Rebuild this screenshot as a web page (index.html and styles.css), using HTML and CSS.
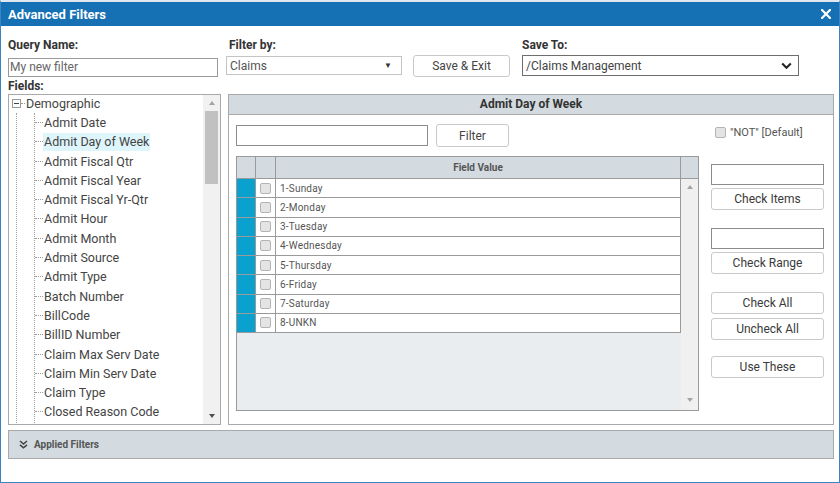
FILE: index.html
```html
<!DOCTYPE html>
<html lang="en">
<head>
    <meta charset="UTF-8">
    <meta name="viewport" content="width=device-width, initial-scale=1.0">
    <title>Advanced Filters</title>
    <link rel="stylesheet" href="styles.css">
</head>
<body>
    <div class="dialog">
        <div class="titlebar">
            <span class="title">Advanced Filters</span>
            <svg class="close" width="10" height="10" viewBox="0 0 10 10">
                <path d="M1 1 L9 9 M9 1 L1 9" stroke="#fff" stroke-width="2.2" stroke-linecap="square"/>
            </svg>
        </div>

        <div class="content">
            <div class="top-row">
                <div class="field query">
                    <label>Query Name:</label>
                    <input class="text" type="text" value="My new filter">
                </div>
                <div class="field filter-by">
                    <label>Filter by:</label>
                    <div class="select light">
                        <span>Claims</span>
                        <span class="caret">&#9660;</span>
                    </div>
                </div>
                <button class="btn save">Save &amp; Exit</button>
                <div class="field save-to">
                    <label>Save To:</label>
                    <div class="select dark">
                        <span>/Claims Management</span>
                        <svg width="11" height="8" viewBox="0 0 11 8">
                            <path d="M1.2 1.5 L5.5 5.8 L9.8 1.5" fill="none" stroke="#222" stroke-width="2"/>
                        </svg>
                    </div>
                </div>
            </div>

            <div class="fields-label">Fields:</div>

            <div class="main">
                <div class="tree">
                    <div class="tree-body">
                        <div class="root">
                            <span class="toggle"></span>
                            <span class="stub"></span>
                            <span>Demographic</span>
                        </div>
                        <div class="branch">
                            <ul class="children">
                                <li>Admit Date</li>
                                <li><span class="sel">Admit Day of Week</span></li>
                                <li>Admit Fiscal Qtr</li>
                                <li>Admit Fiscal Year</li>
                                <li>Admit Fiscal Yr-Qtr</li>
                                <li>Admit Hour</li>
                                <li>Admit Month</li>
                                <li>Admit Source</li>
                                <li>Admit Type</li>
                                <li>Batch Number</li>
                                <li>BillCode</li>
                                <li>BillID Number</li>
                                <li>Claim Max Serv Date</li>
                                <li>Claim Min Serv Date</li>
                                <li>Claim Type</li>
                                <li>Closed Reason Code</li>
                            </ul>
                        </div>
                    </div>
                    <div class="vscroll">
                        <div class="arrow-box"><span class="arrow up"></span></div>
                        <div class="thumb"></div>
                        <div class="track"></div>
                        <div class="arrow-box"><span class="arrow down dark"></span></div>
                    </div>
                </div>

                <div class="panel">
                    <div class="panel-head">Admit Day of Week</div>
                    <div class="panel-body">
                        <div class="values">
                            <div class="filter-row">
                                <input class="text search" type="text">
                                <button class="btn filter">Filter</button>
                            </div>
                            <div class="grid">
                                <div class="grid-head">
                                    <div class="c-flag"></div>
                                    <div class="c-check"></div>
                                    <div class="c-value">Field Value</div>
                                    <div class="c-scroll"></div>
                                </div>
                                <div class="grid-body">
                                    <div class="grid-rows">
                                        <div class="row"><div class="c-flag"></div><div class="c-check"><span class="box"></span></div><div class="c-value">1-Sunday</div></div>
                                        <div class="row"><div class="c-flag"></div><div class="c-check"><span class="box"></span></div><div class="c-value">2-Monday</div></div>
                                        <div class="row"><div class="c-flag"></div><div class="c-check"><span class="box"></span></div><div class="c-value">3-Tuesday</div></div>
                                        <div class="row"><div class="c-flag"></div><div class="c-check"><span class="box"></span></div><div class="c-value">4-Wednesday</div></div>
                                        <div class="row"><div class="c-flag"></div><div class="c-check"><span class="box"></span></div><div class="c-value">5-Thursday</div></div>
                                        <div class="row"><div class="c-flag"></div><div class="c-check"><span class="box"></span></div><div class="c-value">6-Friday</div></div>
                                        <div class="row"><div class="c-flag"></div><div class="c-check"><span class="box"></span></div><div class="c-value">7-Saturday</div></div>
                                        <div class="row"><div class="c-flag"></div><div class="c-check"><span class="box"></span></div><div class="c-value">8-UNKN</div></div>
                                    </div>
                                    <div class="grid-scroll">
                                        <div class="arrow-box"><span class="arrow up"></span></div>
                                        <div class="arrow-box"><span class="arrow down"></span></div>
                                    </div>
                                </div>
                            </div>
                        </div>

                        <div class="actions">
                            <div class="not-row"><span class="box"></span>"NOT" [Default]</div>
                            <input class="text act-input first" type="text">
                            <button class="btn act">Check Items</button>
                            <input class="text act-input second" type="text">
                            <button class="btn act">Check Range</button>
                            <button class="btn act gap">Check All</button>
                            <button class="btn act near">Uncheck All</button>
                            <button class="btn act gap-small">Use These</button>
                        </div>
                    </div>
                </div>
            </div>

            <div class="applied">
                <svg width="9" height="9" viewBox="0 0 9 9">
                    <path d="M1 1 L4.5 4 L8 1 M1 4.8 L4.5 7.8 L8 4.8" fill="none" stroke="#444" stroke-width="1.6"/>
                </svg>
                <span>Applied Filters</span>
            </div>
        </div>
    </div>
</body>
</html>
```

FILE: styles.css
```css
body{
    margin: 0;
    font-family: Roboto, "Liberation Sans", sans-serif;
    background: #fff;
}
.dialog{
    width: 840px;
    height: 483px;
    box-sizing: border-box;
    border: 1px solid #3d84c6;
    border-top: 2px solid #dfe8f1;
    display: flex;
    flex-direction: column;
}
.titlebar{
    height: 24px;
    background: #1670b4;
    display: flex;
    align-items: center;
    justify-content: space-between;
    padding: 0 8px 0 7px;
    flex-shrink: 0;
}
.title{
    color: #fff;
    font-weight: 700;
    font-size: 13px;
}
.content{
    padding: 11px 5px 0 7px;
}

/* top row */
.top-row{
    display: flex;
    align-items: flex-start;
}
.field label{
    display: block;
    font-weight: 700;
    font-size: 12px;
    line-height: 16px;
    color: #333;
    margin-bottom: 3px;
}
.text{
    box-sizing: border-box;
    border: 1px solid #8c8c8c;
    font-family: inherit;
    font-size: 12px;
    color: #666;
    padding: 0 1px;
    margin: 0;
    outline: none;
    background: #fff;
}
.query{
    width: 210px;
}
.query .text{
    width: 210px;
    height: 19px;
    border-color: #9a9a9a;
}
.filter-by{
    margin-left: 8px;
    width: 176px;
}
.filter-by label{
    padding-left: 3px;
}
.select{
    box-sizing: border-box;
    display: flex;
    align-items: center;
    justify-content: space-between;
    font-size: 12px;
    color: #555;
    background: #fff;
}
.select.light{
    height: 19px;
    border: 1px solid #c4c4c4;
    padding: 0 9px 0 3px;
}
.caret{
    font-size: 8px;
    color: #333;
}
.select.dark{
    height: 21px;
    margin-top: -1px;
    border: 1px solid #6e6e6e;
    padding: 0 6px 0 3px;
    color: #444;
}
.btn{
    box-sizing: border-box;
    background: #fff;
    border: 1px solid #c9c9c9;
    border-radius: 3px;
    font-family: inherit;
    font-size: 12px;
    color: #444;
    padding: 0;
    margin: 0;
}
.save{
    margin: 18px 0 0 11px;
    width: 97px;
    height: 22px;
}
.save-to{
    margin-left: 12px;
    width: 277px;
}
.fields-label{
    font-weight: 700;
    font-size: 12px;
    line-height: 16px;
    color: #333;
    margin-top: 1px;
}

/* main area */
.main{
    display: flex;
    height: 331px;
}
.tree{
    width: 213px;
    box-sizing: border-box;
    border: 1px solid #a9a9a9;
    display: flex;
}
.tree-body{
    flex: 1;
    overflow: hidden;
    font-size: 12.5px;
    color: #444;
}
.root{
    display: flex;
    align-items: center;
    height: 19.3px;
    margin-top: -1.5px;
    padding-left: 3px;
}
.toggle{
    width: 9px;
    height: 9px;
    box-sizing: border-box;
    border: 1px solid #9a9a9a;
    background: linear-gradient(#444, #444) center / 5px 1px no-repeat, #fff;
}
.stub{
    width: 4px;
    border-top: 1px dotted #999;
    margin-right: 1px;
}
.branch{
    margin-left: 7px;
    border-left: 1px dotted #a0a0a0;
    height: 320px;
}
.children{
    list-style: none;
    margin: 0 0 0 17px;
    padding: 0;
    border-left: 1px dotted #a0a0a0;
    height: 320px;
}
.children li{
    display: flex;
    align-items: center;
    height: 19.3px;
    white-space: nowrap;
}
.children li::before{
    content: '';
    width: 8px;
    border-top: 1px dotted #999;
    margin-right: 1px;
}
.sel{
    background: #def5fb;
    line-height: 18px;
    padding: 0 1px;
    margin-left: -1px;
}
.vscroll{
    width: 17px;
    background: #f1f1f1;
    display: flex;
    flex-direction: column;
}
.arrow-box{
    height: 16px;
    display: flex;
    align-items: center;
    justify-content: center;
}
.arrow{
    width: 0;
    height: 0;
    border-left: 3.5px solid transparent;
    border-right: 3.5px solid transparent;
}
.arrow.up{
    border-bottom: 4px solid #a3a3a3;
}
.arrow.down{
    border-top: 4px solid #a3a3a3;
}
.arrow.down.dark{
    border-top-color: #505050;
}
.thumb{
    height: 73px;
    margin: 0 2px;
    background: #c1c1c1;
}
.track{
    flex: 1;
}

/* values panel */
.panel{
    flex: 1;
    margin-left: 7px;
    box-sizing: border-box;
    border: 1px solid #a9a9a9;
}
.panel-head{
    height: 19px;
    line-height: 19px;
    background: #d3dbe0;
    border-bottom: 1px solid #a9a9a9;
    text-align: center;
    font-weight: 700;
    font-size: 12px;
    color: #333;
}
.panel-body{
    display: flex;
    padding: 9px 0 0 7px;
}
.values{
    width: 463px;
}
.filter-row{
    display: flex;
    align-items: center;
}
.search{
    width: 192px;
    height: 21px;
}
.filter{
    margin-left: 8px;
    width: 73px;
    height: 23px;
}
.grid{
    margin-top: 9px;
    height: 255px;
    box-sizing: border-box;
    border: 1px solid #9a9a9a;
    display: flex;
    flex-direction: column;
}
.grid-head{
    display: flex;
    height: 22px;
    flex-shrink: 0;
    box-sizing: border-box;
    background: #d3dbe0;
    border-bottom: 1px solid #9a9a9a;
}
.c-flag{
    width: 19px;
    box-sizing: border-box;
    border-right: 1px solid #9a9a9a;
}
.c-check{
    width: 20px;
    box-sizing: border-box;
    border-right: 1px solid #9a9a9a;
    display: flex;
    align-items: center;
    justify-content: center;
}
.c-value{
    width: 405px;
    box-sizing: border-box;
    border-right: 1px solid #9a9a9a;
    font-size: 10px;
    color: #555;
}
.grid-head .c-value{
    font-weight: 700;
    text-align: center;
    line-height: 21px;
}
.c-scroll{
    width: 17px;
}
.grid-body{
    flex: 1;
    display: flex;
}
.grid-rows{
    width: 444px;
    background: #e9edf0;
}
.row{
    display: flex;
    height: 19.25px;
    box-sizing: border-box;
    border-bottom: 1px solid #9a9a9a;
    background: #fff;
}
.row .c-flag{
    background: #0aa1cf;
}
.row .c-value{
    display: flex;
    align-items: center;
    padding-left: 4px;
    letter-spacing: 0.2px;
}
.box{
    width: 11px;
    height: 11px;
    box-sizing: border-box;
    border: 1px solid #b4b4b4;
    border-radius: 2px;
    background: #e4e4e4;
}
.grid-scroll{
    flex: 1;
    background: #f0f0f0;
    display: flex;
    flex-direction: column;
    justify-content: space-between;
    padding: 0 0 2px;
}

/* action buttons */
.actions{
    margin-left: 12px;
    width: 113px;
    display: flex;
    flex-direction: column;
}
.not-row{
    display: flex;
    align-items: center;
    height: 13px;
    padding: 2px 0 0 4px;
    font-size: 11px;
    color: #555;
}
.not-row .box{
    margin-right: 4px;
}
.act-input{
    height: 21px;
    width: 113px;
}
.act-input.first{
    margin-top: 25px;
}
.act-input.second{
    margin-top: 18px;
}
.act{
    height: 22px;
    margin-top: 3px;
    color: #3a3a3a;
}
.act-input.first + .act{
    margin-top: 3px;
}
.act.gap{
    margin-top: 18px;
}
.act.near{
    margin-top: 4px;
}
.act.gap-small{
    margin-top: 16px;
}

/* bottom bar */
.applied{
    margin-top: 5px;
    height: 29px;
    box-sizing: border-box;
    border: 1px solid #a9a9a9;
    background: #d3dbe0;
    display: flex;
    align-items: center;
    padding-left: 10px;
    font-weight: 700;
    font-size: 10px;
    color: #555;
}
.applied span{
    margin-left: 6px;
}
```
